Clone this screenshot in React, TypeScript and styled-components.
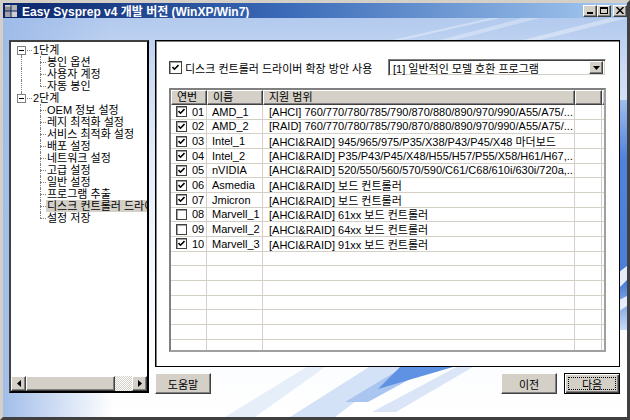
import React from 'react';
import styled, { createGlobalStyle } from 'styled-components';

const FONT = `"Liberation Sans", "Noto Sans CJK KR", sans-serif`;

const GlobalStyle = createGlobalStyle`
  html, body { margin: 0; padding: 0; background: #ffffff; }
  body { font-family: ${FONT}; font-size: 11px; color: #000; }
  * { box-sizing: border-box; }
`;

// classic win9x/2000 raised face
const raised = `
  background: #d4d0c8;
  border: 1px solid;
  border-color: #ffffff #404040 #404040 #ffffff;
  box-shadow: inset -1px -1px 0 #808080;
`;

const Window = styled.div`
  width: 630px;
  height: 420px;
  display: flex;
  flex-direction: column;
  border: 3px solid;
  border-color: #d4d0c8 #404040 #404040 #d4d0c8;
  background: #ffffff;
  overflow: hidden;
`;

const TitleBar = styled.div`
  height: 15px;
  flex: none;
  display: flex;
  align-items: center;
  padding: 0 0 0 1px;
  background: linear-gradient(90deg, #0a246a 0%, #3a6ab8 45%, #a6caf0 100%);
`;

const TitleText = styled.span`
  margin-left: 4px;
  color: #ffffff;
  font-weight: bold;
  font-size: 12px;
  white-space: nowrap;
`;

const CaptionButtons = styled.div`
  margin-left: auto;
  display: flex;
  align-items: center;
  gap: 0;
`;

const CaptionButton = styled.button<{ $gap?: boolean }>`
  ${raised}
  width: 14px;
  height: 12px;
  padding: 0;
  margin-left: ${(p) => (p.$gap ? '2px' : '0')};
  display: flex;
  align-items: center;
  justify-content: center;
`;

const Body = styled.div`
  flex: 1;
  position: relative;
  display: grid;
  grid-template-columns: 140px 465px;
  column-gap: 6px;
  align-items: start;
  padding: 22px 7px 0 6px;
`;

const Backdrop = styled.svg`
  position: absolute;
  left: 0;
  top: 0;
  z-index: 0;
`;

const TreePanel = styled.div`
  position: relative;
  z-index: 1;
  height: 353px;
  display: flex;
  flex-direction: column;
  background: #ffffff;
  border: 2px solid;
  border-color: #404040 #000000 #000000 #404040;
`;

const TreeBody = styled.div`
  flex: 1;
  overflow: hidden;
  padding-top: 2px;
`;

const TreeRow = styled.div`
  height: 12px;
  display: flex;
  align-items: center;
  white-space: nowrap;
`;

const Gutter = styled.span<{ $w: number; $up?: boolean; $down?: boolean; $h?: boolean }>`
  position: relative;
  flex: none;
  width: ${(p) => p.$w}px;
  height: 12px;
  &::before {
    content: '';
    display: ${(p) => (p.$up || p.$down ? 'block' : 'none')};
    position: absolute;
    left: 10px;
    top: ${(p) => (p.$up ? '0' : '6px')};
    bottom: ${(p) => (p.$down ? '0' : '6px')};
    border-left: 1px dotted #808080;
  }
  &::after {
    content: '';
    display: ${(p) => (p.$h ? 'block' : 'none')};
    position: absolute;
    left: 10px;
    right: 0;
    top: 6px;
    border-top: 1px dotted #808080;
  }
`;

const Expander = styled.span`
  position: absolute;
  z-index: 1;
  left: 6px;
  top: 2px;
  width: 9px;
  height: 9px;
  background: #ffffff;
  border: 1px solid #808080;
  &::after {
    content: '';
    position: absolute;
    left: 1px;
    top: 3px;
    width: 5px;
    border-top: 1px solid #000;
  }
`;

const TreeLabel = styled.span<{ $selected?: boolean }>`
  padding: 0 1px;
  line-height: 12px;
  background: ${(p) => (p.$selected ? '#d4d0c8' : 'transparent')};
`;

const HScroll = styled.div`
  height: 15px;
  flex: none;
  display: flex;
`;

const ScrollButton = styled.span`
  ${raised}
  width: 15px;
  height: 15px;
  flex: none;
  display: flex;
  align-items: center;
  justify-content: center;
`;

const ScrollThumb = styled.span`
  ${raised}
  width: 89px;
  flex: none;
`;

const ScrollTrack = styled.span`
  flex: 1;
  background-color: #d4d0c8;
  background-image: repeating-conic-gradient(#ffffff 0 25%, #d4d0c8 0 50%);
  background-size: 2px 2px;
`;

const RightColumn = styled.div`
  position: relative;
  z-index: 1;
  display: flex;
  flex-direction: column;
  gap: 6px;
`;

const Panel = styled.div`
  height: 327px;
  background: #ffffff;
  border: 1px solid #000000;
  box-shadow: inset 1px 1px 0 #808080;
  padding: 18px 13px 0 13px;
  display: flex;
  flex-direction: column;
`;

const OptionRow = styled.div`
  height: 17px;
  display: flex;
  align-items: center;
`;

const Check = styled.span<{ $size: number }>`
  width: ${(p) => p.$size}px;
  height: ${(p) => p.$size}px;
  flex: none;
  background: #ffffff;
  border: 1px solid #404040;
  box-shadow: inset 1px 1px 0 #a0a0a0;
  display: inline-flex;
  align-items: center;
  justify-content: center;
`;

const OptionText = styled.span`
  margin-left: 3px;
  white-space: nowrap;
`;

const Combo = styled.div`
  margin-left: auto;
  width: 218px;
  height: 17px;
  display: flex;
  align-items: center;
  background: #ffffff;
  border: 1px solid;
  border-color: #808080 #ffffff #ffffff #808080;
  box-shadow: inset 1px 1px 0 #404040, inset -1px -1px 0 #d4d0c8;
  padding: 0 2px 0 4px;
`;

const ComboText = styled.span`
  flex: 1;
  white-space: nowrap;
  overflow: hidden;
`;

const ComboArrow = styled.span`
  ${raised}
  width: 14px;
  height: 13px;
  flex: none;
  display: flex;
  align-items: center;
  justify-content: center;
`;

const ListView = styled.div`
  margin-top: 12px;
  height: 264px;
  overflow: hidden;
  background: #ffffff;
  border: 2px solid;
  border-color: #808080 #a0a0a0 #a0a0a0 #808080;
`;

const cols = '36px 56px 312px 27px 1fr';

const HeaderRow = styled.div`
  display: grid;
  grid-template-columns: ${cols};
  height: 15px;
`;

const HeaderCell = styled.div`
  background: #d4d0c8;
  border: 1px solid;
  border-color: #ffffff #404040 #404040 #ffffff;
  box-shadow: inset -1px -1px 0 #808080;
  padding-left: 5px;
  line-height: 12px;
  white-space: nowrap;
  overflow: hidden;
`;

const Row = styled.div`
  display: grid;
  grid-template-columns: ${cols};
  height: 14.67px;
`;

const Cell = styled.div<{ $pad?: number }>`
  display: flex;
  align-items: center;
  padding-left: ${(p) => p.$pad ?? 5}px;
  border-right: 1px solid #d4d0c8;
  border-bottom: 1px solid #d4d0c8;
  white-space: nowrap;
  overflow: hidden;
`;

const Num = styled.span`
  margin-left: 5px;
`;

const ButtonRow = styled.div`
  height: 21px;
  display: flex;
  gap: 7px;
`;

const Spacer = styled.span`
  flex: 1;
`;

const PushButton = styled.button<{ $default?: boolean }>`
  position: relative;
  width: 56px;
  height: 21px;
  padding: 0;
  font-family: ${FONT};
  font-size: 11px;
  color: #000;
  background: #d4d0c8;
  border: 1px solid;
  border-color: ${(p) => (p.$default ? '#000000' : '#ffffff #404040 #404040 #ffffff')};
  box-shadow: ${(p) =>
    p.$default
      ? 'inset 1px 1px 0 #ffffff, inset -1px -1px 0 #404040, inset -2px -2px 0 #808080'
      : 'inset -1px -1px 0 #808080'};
  &::after {
    content: '';
    display: ${(p) => (p.$default ? 'block' : 'none')};
    position: absolute;
    inset: 3px;
    border: 1px dotted #000000;
  }
`;

const CheckMark = () => (
  <svg width="7" height="7" viewBox="0 0 7 7">
    <polyline points="0.5,3 2.5,5.2 6.5,1" fill="none" stroke="#000" strokeWidth="1.6" />
  </svg>
);

const Arrow = ({ dir }: { dir: 'left' | 'right' | 'down' }) => {
  const pts = dir === 'left' ? '4,0 0,3.5 4,7' : dir === 'right' ? '0,0 4,3.5 0,7' : '0,0 7,0 3.5,4';
  const w = dir === 'down' ? 7 : 4;
  const h = dir === 'down' ? 4 : 7;
  return (
    <svg width={w} height={h} viewBox={`0 0 ${w} ${h}`}>
      <polygon points={pts} fill="#000" />
    </svg>
  );
};

const AppIcon = () => (
  <svg width="14" height="14" viewBox="0 0 14 14">
    <rect x="1" y="1" width="5.5" height="5.5" fill="#8e8e8e" />
    <rect x="7.5" y="1" width="5.5" height="5.5" fill="#b4b4b4" />
    <rect x="1" y="7.5" width="5.5" height="5.5" fill="#a2a2a2" />
    <rect x="7.5" y="7.5" width="5.5" height="5.5" fill="#cfcfcf" />
    <rect x="1" y="1" width="5.5" height="1.5" fill="#d8d8d8" />
  </svg>
);

const tree = [
  { label: '1단계', children: ['봉인 옵션', '사용자 계정', '자동 봉인'] },
  {
    label: '2단계',
    children: [
      'OEM 정보 설정',
      '레지 최적화 설정',
      '서비스 최적화 설정',
      '배포 설정',
      '네트워크 설정',
      '고급 설정',
      '일반 설정',
      '프로그램 추출',
      '디스크 컨트롤러 드라이버',
      '설정 저장',
    ],
  },
];

const SELECTED = '디스크 컨트롤러 드라이버';

const drivers = [
  { n: '01', name: 'AMD_1', range: '[AHCI] 760/770/780/785/790/870/880/890/970/990/A55/A75/...', on: true },
  { n: '02', name: 'AMD_2', range: '[RAID] 760/770/780/785/790/870/880/890/970/990/A55/A75/...', on: true },
  { n: '03', name: 'Intel_1', range: '[AHCI&RAID] 945/965/975/P35/X38/P43/P45/X48 마더보드', on: true },
  { n: '04', name: 'Intel_2', range: '[AHCI&RAID] P35/P43/P45/X48/H55/H57/P55/X58/H61/H67,...', on: true },
  { n: '05', name: 'nVIDIA', range: '[AHCI&RAID] 520/550/560/570/590/C61/C68/610i/630i/720a,...', on: true },
  { n: '06', name: 'Asmedia', range: '[AHCI&RAID] 보드 컨트롤러', on: true },
  { n: '07', name: 'Jmicron', range: '[AHCI&RAID] 보드 컨트롤러', on: true },
  { n: '08', name: 'Marvell_1', range: '[AHCI&RAID] 61xx 보드 컨트롤러', on: false },
  { n: '09', name: 'Marvell_2', range: '[AHCI&RAID] 64xx 보드 컨트롤러', on: false },
  { n: '10', name: 'Marvell_3', range: '[AHCI&RAID] 91xx 보드 컨트롤러', on: true },
];

const EMPTY_ROWS = 8;

function Tree() {
  return (
    <TreeBody>
      {tree.map((root, ri) => {
        const lastRoot = ri === tree.length - 1;
        return (
          <React.Fragment key={root.label}>
            <TreeRow>
              <Gutter $w={21} $up={ri > 0} $down={!lastRoot} $h>
                <Expander />
              </Gutter>
              <TreeLabel>{root.label}</TreeLabel>
            </TreeRow>
            {root.children.map((c, ci) => (
              <TreeRow key={c}>
                <Gutter $w={19} $up={!lastRoot} $down={!lastRoot} />
                <Gutter $w={16} $up $down={ci < root.children.length - 1} $h />
                <TreeLabel $selected={c === SELECTED}>{c}</TreeLabel>
              </TreeRow>
            ))}
          </React.Fragment>
        );
      })}
    </TreeBody>
  );
}

function BackdropArt() {
  return (
    <Backdrop width="624" height="399" viewBox="3 18 624 399">
      <defs>
        <linearGradient id="sky" x1="0" y1="0" x2="0" y2="1">
          <stop offset="0" stopColor="#b3caee" />
          <stop offset="0.12" stopColor="#c9daf3" />
          <stop offset="0.35" stopColor="#e4ecf9" />
          <stop offset="0.65" stopColor="#f6f9fd" />
          <stop offset="1" stopColor="#ffffff" />
        </linearGradient>
        <linearGradient id="edge" x1="0" y1="0" x2="1" y2="0">
          <stop offset="0" stopColor="#9dbae8" stopOpacity="0.95" />
          <stop offset="1" stopColor="#9dbae8" stopOpacity="0" />
        </linearGradient>
        <linearGradient id="band" x1="0" y1="0" x2="0" y2="1">
          <stop offset="0" stopColor="#9fbdee" />
          <stop offset="0.25" stopColor="#4f84dc" />
          <stop offset="0.8" stopColor="#4a7fd8" />
          <stop offset="1" stopColor="#c9dbf4" />
        </linearGradient>
      </defs>
      <rect x="3" y="18" width="624" height="399" fill="url(#sky)" />
      <rect x="3" y="18" width="110" height="399" fill="url(#edge)" />
      <polygon points="393,40 490,18 500,18 402,40" fill="#ffffff" opacity="0.35" />
      <polygon points="440,40 523,18 540,18 455,40" fill="#ffffff" opacity="0.3" />
      <polygon points="523,40 610,18 627,18 540,40" fill="#ffffff" opacity="0.35" />
      <rect x="619" y="100" width="8" height="230" fill="url(#band)" />
      <polygon points="619,272 627,266 627,280 619,288" fill="#ffffff" opacity="0.85" />
      <polygon points="619,300 627,296 627,306 619,311" fill="#ffffff" opacity="0.8" />
      <polygon points="225,417 318,360 335,360 255,417" fill="#e6eefa" />
      <polygon points="290,417 380,360 410,360 335,417" fill="#d4e2f7" />
      <polygon points="345,402 415,360 445,360 368,402" fill="#a9c5f0" />
      <polygon points="378,389 470,362 405,362" fill="#5f92e2" />
      <polygon points="372,412 462,364 478,364 396,412" fill="#dae6f8" />
    </Backdrop>
  );
}

export default function App() {
  return (
    <>
      <GlobalStyle />
      <Window>
        <TitleBar>
          <AppIcon />
          <TitleText>Easy Sysprep v4 개발 버전 (WinXP/Win7)</TitleText>
          <CaptionButtons>
            <CaptionButton aria-label="minimize">
              <svg width="6" height="6" viewBox="0 0 6 6">
                <rect x="0" y="4" width="6" height="2" fill="#000" />
              </svg>
            </CaptionButton>
            <CaptionButton aria-label="maximize">
              <svg width="8" height="7" viewBox="0 0 8 7">
                <rect x="0.5" y="0.5" width="7" height="6" fill="none" stroke="#000" />
                <rect x="0" y="0" width="8" height="2" fill="#000" />
              </svg>
            </CaptionButton>
            <CaptionButton aria-label="close" $gap>
              <svg width="8" height="7" viewBox="0 0 8 7">
                <path d="M0.5 0 L7.5 7 M7.5 0 L0.5 7" stroke="#000" strokeWidth="1.5" />
              </svg>
            </CaptionButton>
          </CaptionButtons>
        </TitleBar>
        <Body>
          <BackdropArt />
          <TreePanel>
            <Tree />
            <HScroll>
              <ScrollButton>
                <Arrow dir="left" />
              </ScrollButton>
              <ScrollThumb />
              <ScrollTrack />
              <ScrollButton>
                <Arrow dir="right" />
              </ScrollButton>
            </HScroll>
          </TreePanel>
          <RightColumn>
            <Panel>
              <OptionRow>
                <Check $size={13}>
                  <CheckMark />
                </Check>
                <OptionText>디스크 컨트롤러 드라이버 확장 방안 사용</OptionText>
                <Combo>
                  <ComboText>[1] 일반적인 모델 호환 프로그램</ComboText>
                  <ComboArrow>
                    <Arrow dir="down" />
                  </ComboArrow>
                </Combo>
              </OptionRow>
              <ListView>
                <HeaderRow>
                  <HeaderCell>연번</HeaderCell>
                  <HeaderCell>이름</HeaderCell>
                  <HeaderCell>지원 범위</HeaderCell>
                  <HeaderCell />
                  <HeaderCell />
                </HeaderRow>
                {drivers.map((d) => (
                  <Row key={d.n}>
                    <Cell>
                      <Check $size={11}>{d.on && <CheckMark />}</Check>
                      <Num>{d.n}</Num>
                    </Cell>
                    <Cell>{d.name}</Cell>
                    <Cell $pad={6}>{d.range}</Cell>
                    <Cell />
                    <Cell />
                  </Row>
                ))}
                {Array.from({ length: EMPTY_ROWS }).map((_, i) => (
                  <Row key={`e${i}`}>
                    <Cell />
                    <Cell />
                    <Cell />
                    <Cell />
                    <Cell />
                  </Row>
                ))}
              </ListView>
            </Panel>
            <ButtonRow>
              <PushButton>도움말</PushButton>
              <Spacer />
              <PushButton>이전</PushButton>
              <PushButton $default>다음</PushButton>
            </ButtonRow>
          </RightColumn>
        </Body>
      </Window>
    </>
  );
}
